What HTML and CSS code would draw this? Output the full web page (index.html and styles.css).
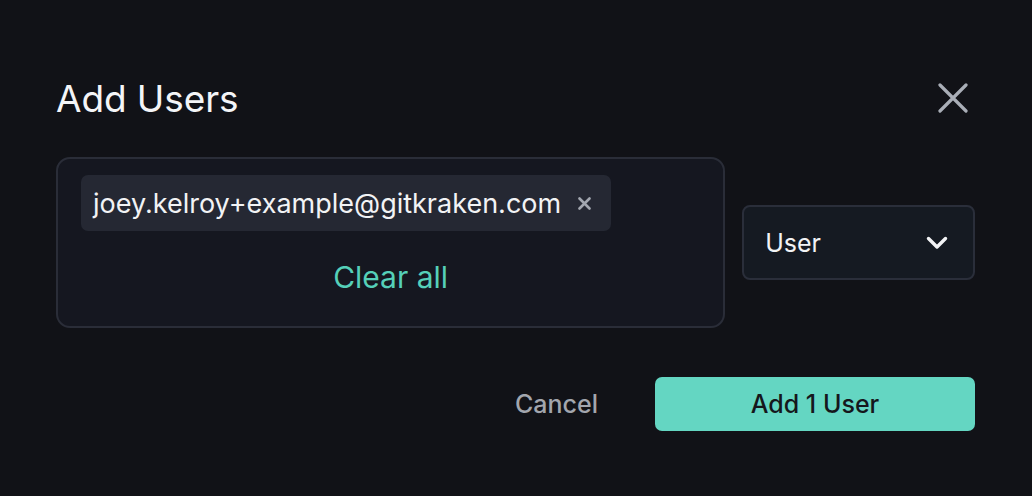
FILE: index.html
```html
<!DOCTYPE html>
<html>
<head>
<meta charset="utf-8">
<link rel="stylesheet" href="styles.css">
</head>
<body>
<div class="dialog">
  <div class="header">
    <h1 class="title">Add Users</h1>
    <button class="close" aria-label="Close">
      <svg width="30" height="30" viewBox="0 0 30 30"><path d="M2 2 L28 28 M28 2 L2 28" stroke="#a9aeb7" stroke-width="3.2" stroke-linecap="round"/></svg>
    </button>
  </div>
  <div class="body">
    <div class="input-box">
      <div class="chips">
        <span class="chip">joey.kelroy+example@gitkraken.com<span class="chip-x">
          <svg width="13" height="13" viewBox="0 0 13 13"><path d="M1.5 1.5 L11.5 11.5 M11.5 1.5 L1.5 11.5" stroke="#a3a7b0" stroke-width="2.6" stroke-linecap="round"/></svg>
        </span></span>
      </div>
      <div class="clear">Clear all</div>
    </div>
    <div class="select">
      <span>User</span>
      <svg width="22" height="14" viewBox="0 0 22 14"><path d="M2.5 2.5 L11 11 L19.5 2.5" fill="none" stroke="#f2f3f5" stroke-width="3.4" stroke-linecap="round" stroke-linejoin="round"/></svg>
    </div>
  </div>
  <div class="footer">
    <button class="cancel">Cancel</button>
    <button class="primary">Add 1 User</button>
  </div>
</div>
</body>
</html>
```
FILE: styles.css
```css
* { box-sizing: border-box; }
html, body { margin: 0; padding: 0; }
body {
  background: #111217;
  font-family: Inter, "Noto Sans", sans-serif;
  color: #f1f2f4;
  width: 1032px;
  height: 496px;
  overflow: hidden;
}
.dialog {
  padding: 70px 57px 0 56px;
}
.header {
  display: flex;
  justify-content: space-between;
  align-items: center;
  height: 56px;
}
.title {
  margin: 0;
  font-size: 37px;
  font-weight: 400;
  letter-spacing: -0.1px;
  color: #f4f5f7;
}
.close {
  background: none;
  border: 0;
  padding: 0;
  margin-right: 7px;
  width: 30px;
  height: 30px;
  display: flex;
}
.body {
  margin-top: 31px;
  display: flex;
  align-items: center;
  gap: 17px;
}
.input-box {
  width: 670px;
  height: 171px;
  border: 2px solid #2a2d38;
  border-radius: 14px;
  background: #151720;
  padding: 16px 23px;
  display: flex;
  flex-direction: column;
}
.chips { display: flex; }
.chip {
  display: inline-flex;
  align-items: center;
  height: 56px;
  padding: 0 20px 0 12px;
  background: #252833;
  border-radius: 7px;
  font-size: 27px;
  color: #f2f3f5;
  gap: 17px;
}
.chip-x { display: flex; }
.clear {
  margin-top: 28px;
  text-align: center;
  color: #55d0b9;
  font-size: 30px;
}
.select {
  width: 233px;
  height: 75px;
  border: 2px solid #2a2e3a;
  border-radius: 8px;
  background: #151a22;
  display: flex;
  align-items: center;
  justify-content: space-between;
  padding: 0 25px 0 21px;
  font-size: 25px;
  color: #f2f3f5;
}
.footer {
  margin-top: 49px;
  display: flex;
  justify-content: flex-end;
  align-items: center;
}
button { font-family: inherit; cursor: pointer; }
.cancel {
  background: none;
  border: 0;
  color: #a2a6ae;
  font-size: 25px;
  font-weight: 500;
  padding: 0;
  margin-right: 57px;
}
.primary {
  width: 320px;
  height: 54px;
  border: 0;
  border-radius: 7px;
  background: #64d6c2;
  color: #15171c;
  font-size: 25px;
  font-weight: 500;
}
```
